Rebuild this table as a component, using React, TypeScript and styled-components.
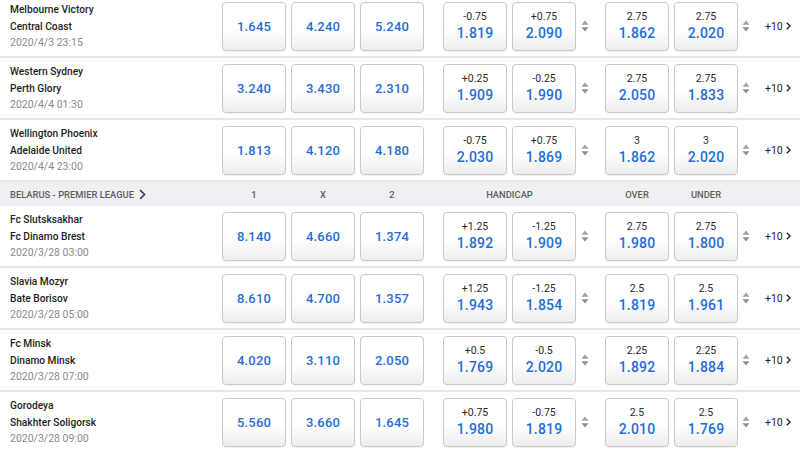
import React from "react";
import styled, { createGlobalStyle } from "styled-components";

const Global = createGlobalStyle`
  html, body { margin: 0; padding: 0; background: #fff; overflow: hidden; }
  body { font-family: Roboto, "Liberation Sans", Arial, sans-serif; }
`;

type Match = {
  home: string;
  away: string;
  date: string;
  x12: [string, string, string];
  hcp: [[string, string], [string, string]];
  ou: [[string, string], [string, string]];
};

type Section = { league?: string; matches: Match[] };

const sections: Section[] = [
  {
    matches: [
      { home: "Melbourne Victory", away: "Central Coast", date: "2020/4/3 23:15", x12: ["1.645", "4.240", "5.240"], hcp: [["-0.75", "1.819"], ["+0.75", "2.090"]], ou: [["2.75", "1.862"], ["2.75", "2.020"]] },
      { home: "Western Sydney", away: "Perth Glory", date: "2020/4/4 01:30", x12: ["3.240", "3.430", "2.310"], hcp: [["+0.25", "1.909"], ["-0.25", "1.990"]], ou: [["2.75", "2.050"], ["2.75", "1.833"]] },
      { home: "Wellington Phoenix", away: "Adelaide United", date: "2020/4/4 23:00", x12: ["1.813", "4.120", "4.180"], hcp: [["-0.75", "2.030"], ["+0.75", "1.869"]], ou: [["3", "1.862"], ["3", "2.020"]] },
    ],
  },
  {
    league: "BELARUS - PREMIER LEAGUE",
    matches: [
      { home: "Fc Slutsksakhar", away: "Fc Dinamo Brest", date: "2020/3/28 03:00", x12: ["8.140", "4.660", "1.374"], hcp: [["+1.25", "1.892"], ["-1.25", "1.909"]], ou: [["2.75", "1.980"], ["2.75", "1.800"]] },
      { home: "Slavia Mozyr", away: "Bate Borisov", date: "2020/3/28 05:00", x12: ["8.610", "4.700", "1.357"], hcp: [["+1.25", "1.943"], ["-1.25", "1.854"]], ou: [["2.5", "1.819"], ["2.5", "1.961"]] },
      { home: "Fc Minsk", away: "Dinamo Minsk", date: "2020/3/28 07:00", x12: ["4.020", "3.110", "2.050"], hcp: [["+0.5", "1.769"], ["-0.5", "2.020"]], ou: [["2.25", "1.892"], ["2.25", "1.884"]] },
      { home: "Gorodeya", away: "Shakhter Soligorsk", date: "2020/3/28 09:00", x12: ["5.560", "3.660", "1.645"], hcp: [["+0.75", "1.980"], ["-0.75", "1.819"]], ou: [["2.5", "2.010"], ["2.5", "1.769"]] },
    ],
  },
];

const Page = styled.div`
  margin-top: -4px;
  width: 800px;
`;

const Row = styled.div`
  display: flex;
  align-items: center;
  height: 60px;
  padding-left: 10px;
  border-bottom: 2px solid #e6e6e6;
  box-sizing: content-box;
`;

const HeaderRow = styled.div`
  display: flex;
  align-items: center;
  height: 24px;
  padding-left: 10px;
  background: #eef0f4;
  color: #5e5e5e;
  font-size: 9.4px;
  font-weight: 500;
  text-transform: uppercase;
`;

const TeamCol = styled.div`
  width: 212px;
  display: flex;
  flex-direction: column;
  line-height: 16.5px;
  padding-top: 2px;
`;

const Team = styled.div`
  color: #1e1e1e;
  font-weight: 500;
  font-size: 10.2px;
`;

const DateText = styled.div`
  color: #8a8a8a;
  font-size: 10.5px;
`;

const LeagueName = styled.div`
  width: 212px;
  display: flex;
  align-items: center;
  gap: 5px;
`;

const Group = styled.div<{ $ml?: number }>`
  display: flex;
  gap: 5px;
  margin-left: ${(p) => p.$ml ?? 0}px;
`;

const HeadCell = styled.div<{ $w: number; $ml?: number }>`
  width: ${(p) => p.$w}px;
  margin-left: ${(p) => p.$ml ?? 0}px;
  text-align: center;
`;

const OddBtn = styled.div`
  width: 64px;
  height: 49px;
  box-sizing: border-box;
  border: 1px solid #c9c9c9;
  border-radius: 4px;
  background: linear-gradient(#ffffff 0%, #ffffff 55%, #ededed 100%);
  box-shadow: 0 1px 1px rgba(0, 0, 0, 0.06);
  display: flex;
  flex-direction: column;
  align-items: center;
  justify-content: center;
`;

const Price = styled.div<{ $big?: boolean }>`
  color: #1f6ed6;
  font-size: ${(p) => (p.$big ? 14 : 13)}px;
  font-weight: 500;
  line-height: ${(p) => (p.$big ? 17 : 15)}px;
  letter-spacing: 0.2px;
`;

const Line = styled.div`
  color: #2a2a2a;
  font-size: 10.5px;
  line-height: 13px;
  margin-bottom: 2px;
`;

const ArrowBox = styled.div<{ $ml: number; $mr: number }>`
  width: 9px;
  margin-left: ${(p) => p.$ml}px;
  margin-right: ${(p) => p.$mr}px;
  display: flex;
  justify-content: center;
`;

const More = styled.div`
  display: flex;
  align-items: center;
  gap: 3px;
  font-size: 10.5px;
  color: #222;
`;

const Arrows = () => (
  <svg width="8" height="12" viewBox="0 0 8 12">
    <path d="M4 0.5 L7.5 4.8 L0.5 4.8 Z" fill="#a3a3a3" />
    <path d="M4 11.5 L7.5 7.2 L0.5 7.2 Z" fill="#8f8f8f" />
  </svg>
);

const Chevron = ({ size = 8, color = "#222", stroke = 1.6 }: { size?: number; color?: string; stroke?: number }) => (
  <svg width={size * 0.6} height={size} viewBox="0 0 6 10">
    <path d="M1 1 L5 5 L1 9" fill="none" stroke={color} strokeWidth={stroke} />
  </svg>
);

const HcpBtn = ({ line, price }: { line: string; price: string }) => (
  <OddBtn>
    <Line>{line}</Line>
    <Price $big>{price}</Price>
  </OddBtn>
);

const MatchRow = ({ m }: { m: Match }) => (
  <Row>
    <TeamCol>
      <Team>{m.home}</Team>
      <Team>{m.away}</Team>
      <DateText>{m.date}</DateText>
    </TeamCol>
    <Group>
      {m.x12.map((p, i) => (
        <OddBtn key={i}>
          <Price>{p}</Price>
        </OddBtn>
      ))}
    </Group>
    <Group $ml={19}>
      <HcpBtn line={m.hcp[0][0]} price={m.hcp[0][1]} />
      <HcpBtn line={m.hcp[1][0]} price={m.hcp[1][1]} />
    </Group>
    <ArrowBox $ml={4} $mr={16}>
      <Arrows />
    </ArrowBox>
    <Group>
      <HcpBtn line={m.ou[0][0]} price={m.ou[0][1]} />
      <HcpBtn line={m.ou[1][0]} price={m.ou[1][1]} />
    </Group>
    <ArrowBox $ml={3} $mr={15}>
      <Arrows />
    </ArrowBox>
    <More>
      +10
      <Chevron size={8} />
    </More>
  </Row>
);

const LeagueHeader = ({ name }: { name: string }) => (
  <HeaderRow>
    <LeagueName>
      {name}
      <Chevron size={11} color="#444" stroke={1.5} />
    </LeagueName>
    <HeadCell $w={64}>1</HeadCell>
    <HeadCell $w={64} $ml={5}>X</HeadCell>
    <HeadCell $w={64} $ml={5}>2</HeadCell>
    <HeadCell $w={133} $ml={19}>HANDICAP</HeadCell>
    <HeadCell $w={64} $ml={29}>OVER</HeadCell>
    <HeadCell $w={64} $ml={5}>UNDER</HeadCell>
  </HeaderRow>
);

export default function App() {
  return (
    <>
      <Global />
      <Page>
        {sections.map((s, si) => (
          <React.Fragment key={si}>
            {s.league && <LeagueHeader name={s.league} />}
            {s.matches.map((m, mi) => (
              <MatchRow key={mi} m={m} />
            ))}
          </React.Fragment>
        ))}
      </Page>
    </>
  );
}
